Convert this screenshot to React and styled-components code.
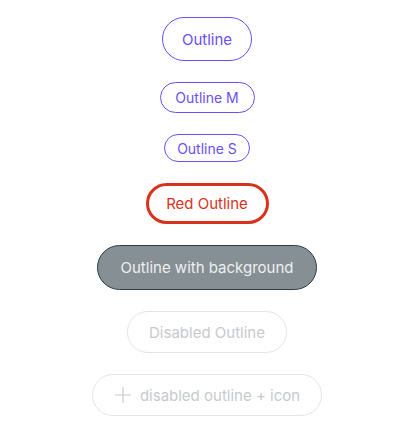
import React from 'react';
import styled, { createGlobalStyle, css } from 'styled-components';

const GlobalStyle = createGlobalStyle`
  body {
    margin: 0;
    background: #fff;
    font-family: Inter, "Noto Sans", sans-serif;
  }
`;

const Page = styled.div`
  display: flex;
  flex-direction: column;
  align-items: center;
  padding-top: 17px;
  gap: 21px;
`;

const sizes = {
  l: css`
    height: 42px;
    font-size: 15px;
  `,
  m: css`
    height: 31px;
    font-size: 14px;
  `,
  s: css`
    height: 28px;
    font-size: 14px;
  `,
};

const variants = {
  primary: css`
    color: #6b4ff6;
    border: 1px solid #6b4ff6;
    background: #fff;
  `,
  red: css`
    color: #d8321d;
    border: 3px solid #d8321d;
    background: #fff;
  `,
  filled: css`
    color: #eef0f1;
    border: 1.5px solid #2d3d48;
    background: #868f93;
  `,
  disabled: css`
    color: #c7cacf;
    border: 1px solid #e3e5e9;
    background: #fff;
  `,
};

const Button = styled.button`
  display: inline-flex;
  align-items: center;
  justify-content: center;
  gap: 8px;
  box-sizing: border-box;
  padding: 0;
  white-space: nowrap;
  border-radius: 999px;
  font-family: Inter, "Noto Sans", sans-serif;
  font-weight: 400;
  cursor: pointer;
  ${(p) => sizes[p.$size || 'l']}
  ${(p) => variants[p.$variant || 'primary']}
  width: ${(p) => p.$width}px;
  ${(p) => p.$height && `height: ${p.$height}px;`}
  &:disabled {
    cursor: default;
  }
`;

const PlusIcon = () => (
  <svg width="18" height="18" viewBox="0 0 18 18" fill="none" stroke="#c7cacf" strokeWidth="1.2">
    <path d="M9 1v16M1 9h16" />
  </svg>
);

export default function App() {
  return (
    <>
      <GlobalStyle />
      <Page>
        <Button $width={90} $height={44}>Outline</Button>
        <Button $size="m" $width={95}>Outline M</Button>
        <Button $size="s" $width={86}>Outline S</Button>
        <Button $variant="red" $width={123} $height={41}>Red Outline</Button>
        <Button $variant="filled" $width={220} $height={45}>Outline with background</Button>
        <Button $variant="disabled" $width={160}>Disabled Outline</Button>
        <Button $variant="disabled" $width={230} disabled>
          <PlusIcon />
          disabled outline + icon
        </Button>
      </Page>
    </>
  );
}
